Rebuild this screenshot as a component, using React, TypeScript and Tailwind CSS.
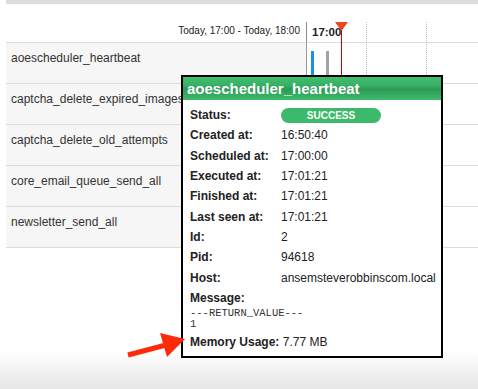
import React from "react";

const rows = [
  "aoescheduler_heartbeat",
  "captcha_delete_expired_images",
  "captcha_delete_old_attempts",
  "core_email_queue_send_all",
  "newsletter_send_all",
];

const details: [string, string][] = [
  ["Created at:", "16:50:40"],
  ["Scheduled at:", "17:00:00"],
  ["Executed at:", "17:01:21"],
  ["Finished at:", "17:01:21"],
  ["Last seen at:", "17:01:21"],
  ["Id:", "2"],
  ["Pid:", "94618"],
  ["Host:", "ansemsteverobbinscom.local"],
];

export default function App() {
  return (
    <div className="relative w-[478px] h-[389px] bg-white overflow-hidden flex flex-col font-['Liberation_Sans',Arial,sans-serif] text-[#333]">
      <div className="ml-[6px] h-[4px] bg-[#dcdcdc] shrink-0" />
      <div className="ml-[6px] flex shrink-0">
        <div className="w-[300px]">
          <div className="h-[38px] flex items-end justify-end pr-[6px] pb-[5px] text-[10px] leading-[12px] text-[#222]">
            Today, 17:00 - Today, 18:00
          </div>
          {rows.map((r) => (
            <div
              key={r}
              className="h-[41px] border-t border-[#dcdcdc] bg-[#f6f6f6] pl-[5px] pt-[8px] text-[12px] leading-[14px] whitespace-nowrap"
            >
              {r}
            </div>
          ))}
          <div className="border-t border-[#dcdcdc]" />
        </div>
        <div className="flex-1 relative">
          <div className="h-[38px] flex flex-col justify-end">
            <div className="h-[20px] border-l border-[#888] pl-[5px] text-[11.5px] font-bold leading-[20px] text-[#222]">
              17:00
            </div>
          </div>
          {rows.map((r, i) => (
            <div key={r} className="relative h-[41px] border-t border-l border-t-[#dcdcdc] border-l-[#999]">
              {i === 0 && (
                <>
                  <div className="absolute left-[4px] top-[8px] w-[3px] h-[28px] bg-[#1a8fe6]" />
                  <div className="absolute left-[19px] top-[8px] w-[3px] h-[28px] bg-[#a3a3a3]" />
                </>
              )}
            </div>
          ))}
          <div className="border-t border-[#dcdcdc]" />
          <div className="absolute left-[60px] top-[18px] bottom-[1px] border-l border-dotted border-[#bbb]" />
          <div className="absolute left-[120px] top-[18px] bottom-[1px] border-l border-dotted border-[#bbb]" />
          <div className="absolute left-[35px] top-[24px] bottom-[1px] w-px bg-[#d00000]" />
          <svg className="absolute left-[29px] top-[18px]" width="13" height="9" viewBox="0 0 13 9">
            <polygon points="0,0 13,0 6.5,9" fill="#e8461b" />
          </svg>
        </div>
      </div>
      <div className="flex-1" />
      <div className="h-[38px] shrink-0 bg-gradient-to-b from-white to-[#e6e6e6]" />

      {/* Tooltip popup */}
      <div className="absolute left-[181px] top-[75px] w-[262px] h-[283px] border-2 border-black bg-white text-[#222] flex flex-col">
        <div className="h-[23px] shrink-0 pl-[4px] text-white font-bold text-[15px] leading-[23px] bg-[linear-gradient(to_bottom,#40c070_0%,#37b065_35%,#2c9a53_55%,#36af64_80%,#3dbb6b_100%)]">
          aoescheduler_heartbeat
        </div>
        <div className="pl-[7px] pt-[5px] text-[12px]">
          <div className="flex items-center h-[20.3px]">
            <div className="w-[91px] font-bold">Status:</div>
            <div className="w-[100px] h-[15px] rounded-full bg-[#3cb96a] text-white font-bold text-[10px] leading-[15px] text-center">
              SUCCESS
            </div>
          </div>
          {details.map(([k, v]) => (
            <div key={k} className="flex items-center h-[20.3px]">
              <div className="w-[91px] font-bold">{k}</div>
              <div className="whitespace-nowrap">{v}</div>
            </div>
          ))}
          <div className="flex items-center h-[20.3px] font-bold">Message:</div>
          <div className="font-['Liberation_Mono','Courier_New',monospace] text-[10.5px] leading-[11px] text-[#333]">
            <div>---RETURN_VALUE---</div>
            <div>1</div>
          </div>
          <div className="flex items-center h-[20px] mt-[2px] whitespace-nowrap">
            <span className="font-bold">Memory Usage:</span>
            <span>&nbsp;7.77 MB</span>
          </div>
        </div>
      </div>

      {/* Red arrow */}
      <svg className="absolute left-0 top-0 pointer-events-none" width="478" height="389" viewBox="0 0 478 389">
        <line x1="128" y1="355" x2="166" y2="345" stroke="#ff2a0a" strokeWidth="5" />
        <polygon points="185,339 160,333 167,357" fill="#ff2a0a" />
      </svg>
    </div>
  );
}
